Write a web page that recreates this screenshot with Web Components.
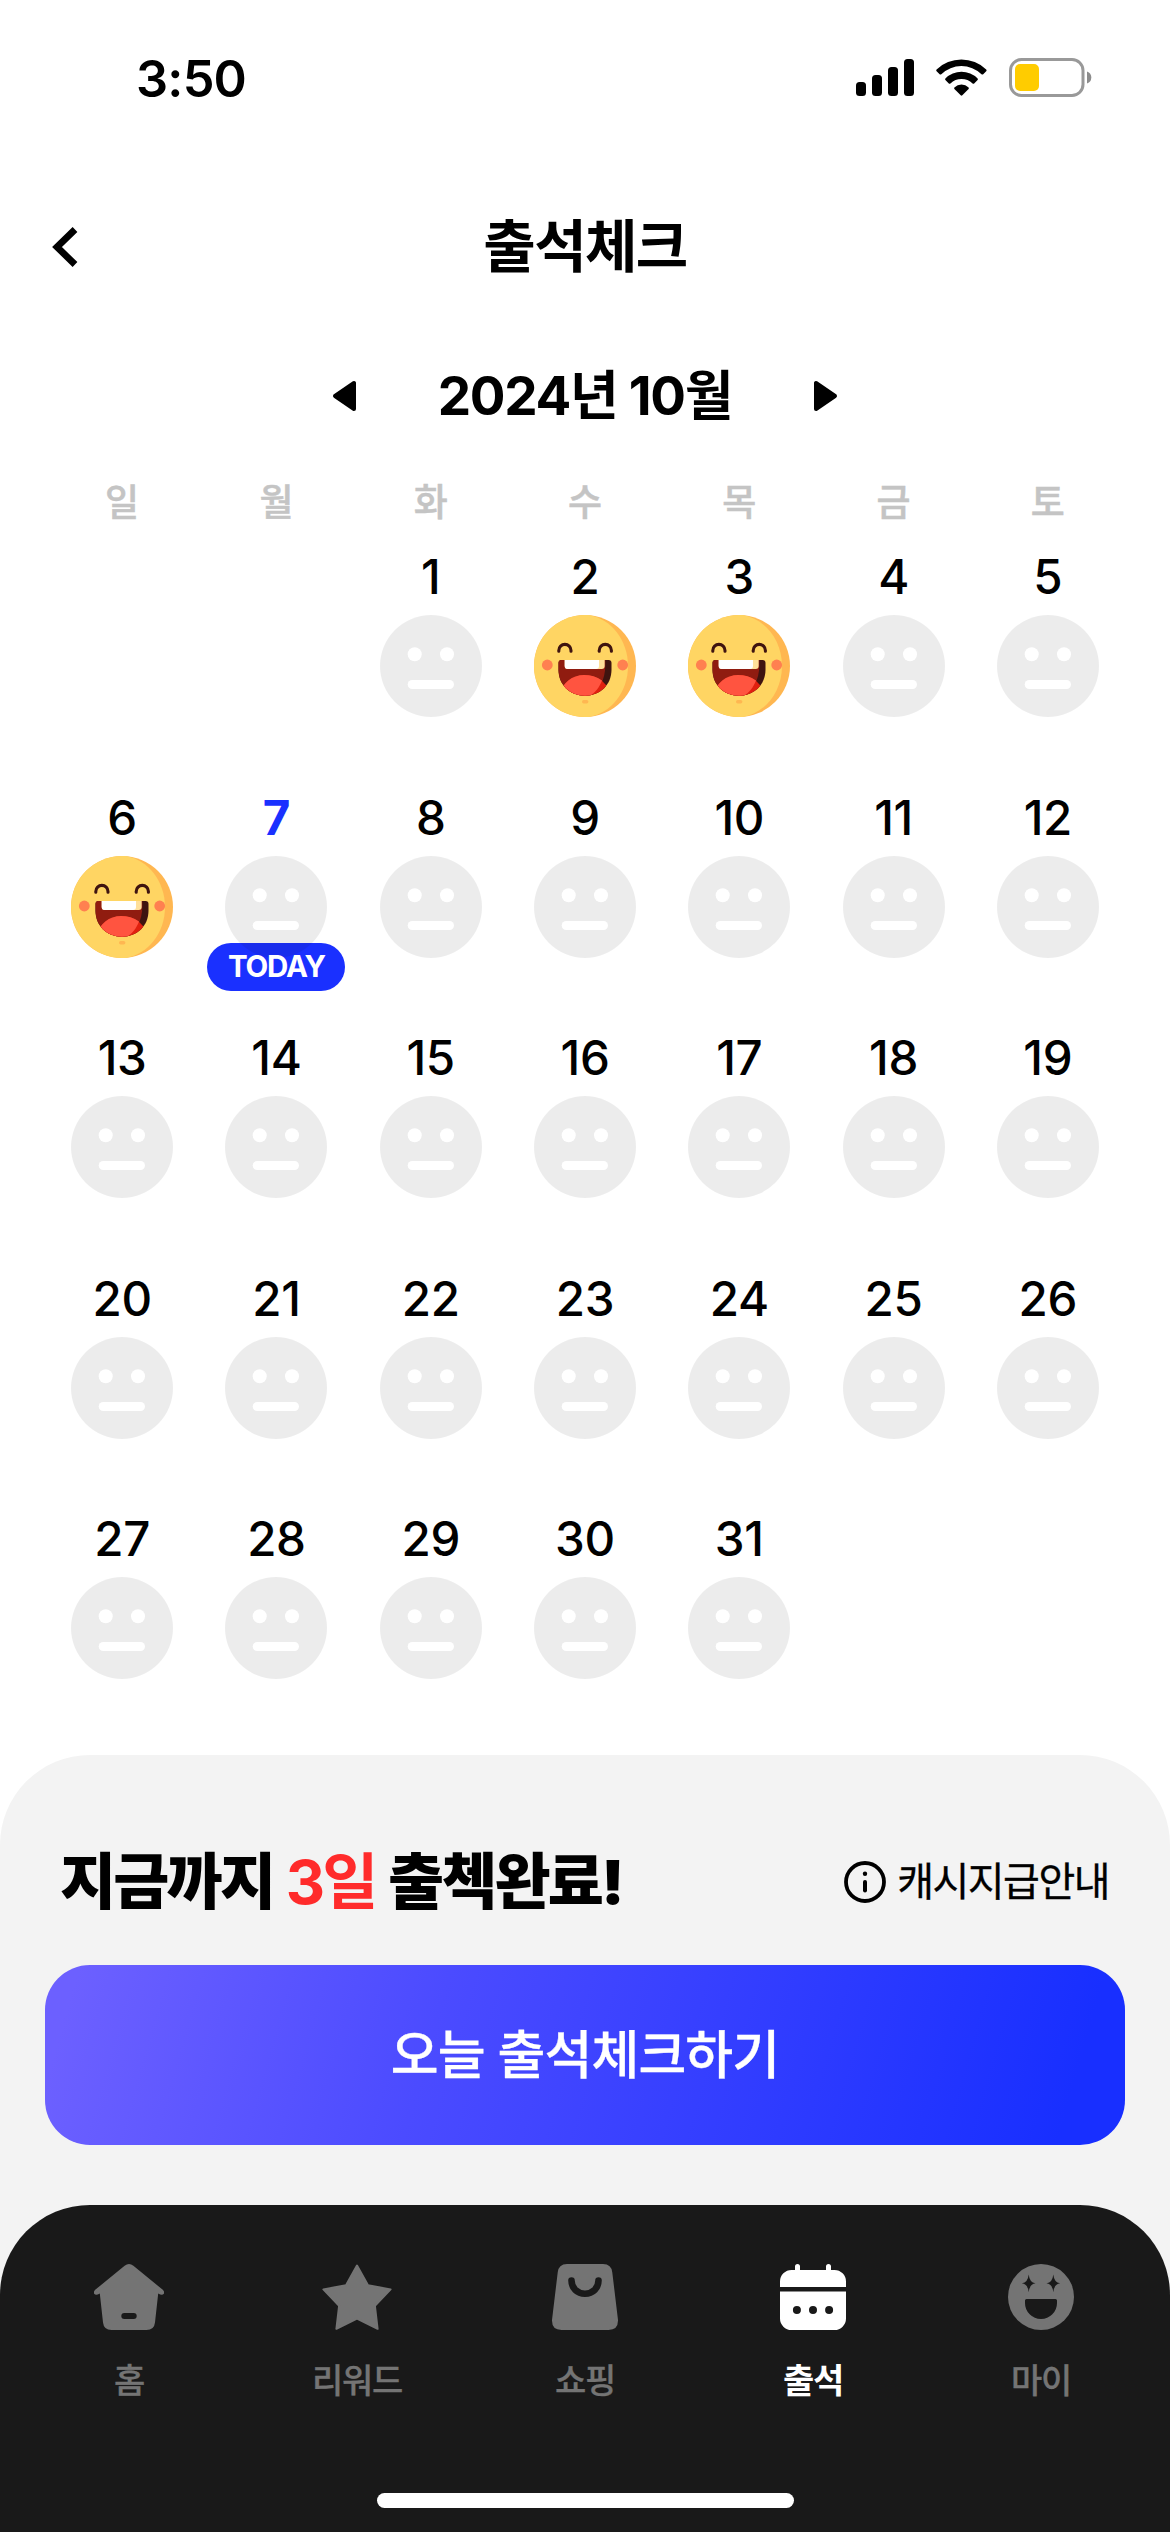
<!DOCTYPE html>
<html lang="ko">
<head>
<meta charset="utf-8">
<title>출석체크</title>
<style>
  body {
    margin: 0;
    background: #fff;
    color: #000;
    font-family: Inter, "Noto Sans CJK KR", sans-serif;
  }
</style>
</head>
<body>
<attendance-app></attendance-app>

<script>
// small helper, every element here just stamps markup in an open root
class BaseElement extends HTMLElement {
  constructor() {
    super();
    this._shadowRoot = this.attachShadow({mode: 'open'});
  }
  connectedCallback() {
    this._shadowRoot.innerHTML = this.render();
  }
}

class StatusBar extends BaseElement {
  render() {
    return `
      <style>
        :host { display: flex; justify-content: space-between; height: 156px; box-sizing: border-box; padding: 58px 78px 0 136px; }
        .time { font-size: 50.5px; font-weight: 600; line-height: 41px; letter-spacing: -0.8px; }
        svg { display: block; }
      </style>
      <span class="time">3:50</span>
      <svg width="236" height="40" viewBox="856 58 236 40">
        <rect x="856" y="82" width="10" height="14" rx="3.5"/>
        <rect x="872" y="75" width="10" height="21" rx="3.5"/>
        <rect x="888" y="67" width="10" height="29" rx="3.5"/>
        <rect x="904" y="59" width="10" height="37" rx="3.5"/>
        <path d="M936.6 69.4A36 36 0 0 1 986.2 69.4Q987 70.3 986.2 71.2L983.2 74.2Q982.4 74.9 981.5 74.2A29 29 0 0 0 941.3 74.2Q940.4 74.9 939.6 74.2L936.6 71.2Q935.8 70.3 936.6 69.4Z"/>
        <path d="M945.4 78.4A23 23 0 0 1 977.6 78.4Q978.3 79.2 977.6 80L974.2 83.4Q973.4 84.1 972.6 83.4A16.3 16.3 0 0 0 950.4 83.4Q949.6 84.1 948.8 83.4L945.4 80Q944.7 79.2 945.4 78.4Z"/>
        <path d="M954.4 87.4A10.4 10.4 0 0 1 968.6 87.4Q969.2 88.2 968.6 88.9L962.3 95.3Q961.5 96 960.7 95.3L954.4 88.9Q953.8 88.2 954.4 87.4Z"/>
        <rect x="1010.5" y="59.5" width="72.5" height="36" rx="11" fill="none" stroke="#999" stroke-width="3"/>
        <rect x="1015" y="64" width="24" height="27" rx="5" fill="#fc0"/>
        <path d="M1087 71.5Q1091.3 73 1091.3 77.5T1087 83.5Z" fill="#8c8c8c"/>
      </svg>
    `;
  }
}

class TitleBar extends BaseElement {
  render() {
    return `
      <style>
        :host { display: grid; grid-template-columns: 100px 1fr 100px; align-items: center; height: 182px; }
        h1 { margin: 0; text-align: center; font-size: 57px; font-weight: 700; line-height: 80px; letter-spacing: -1.6px; }
        svg { margin-left: 50px; display: block; }
      </style>
      <svg width="30" height="42" viewBox="0 0 30 42"><path d="M25 3.5L7 21L25 38.5" fill="none" stroke="#000" stroke-width="6.8"/></svg>
      <h1><slot></slot></h1>
    `;
  }
}

class MonthPicker extends BaseElement {
  render() {
    return `
      <style>
        :host { display: flex; justify-content: center; align-items: center; gap: 80px; height: 116px; }
        h2 { margin: 0; width: 296px; text-align: center; white-space: nowrap; font-size: 53px; font-weight: 700; line-height: 70px; letter-spacing: -1.3px; }
        svg { display: block; }
      </style>
      <svg width="25" height="32" viewBox="0 0 25 32"><path d="M22 3V29L3 16Z" stroke="#000" stroke-width="4" stroke-linejoin="round"/></svg>
      <h2><slot></slot></h2>
      <svg width="25" height="32" viewBox="0 0 25 32"><path d="M3 3V29L22 16Z" stroke="#000" stroke-width="4" stroke-linejoin="round"/></svg>
    `;
  }
}

class FaceStamp extends BaseElement {
  render() {
    const off = `
      <circle cx="51" cy="51" r="51" fill="#000" fill-opacity=".073"/>
      <circle cx="34.7" cy="39.3" r="7" fill="#fff"/>
      <circle cx="67" cy="39.3" r="7" fill="#fff"/>
      <rect x="27.7" y="65" width="46.3" height="9" rx="4.5" fill="#fff"/>`;
    const on = `
      <defs><clipPath id="m"><path d="M27.5 45H74.5Q77.5 45 77.5 48V54.5C77.5 70 66 80.7 51 80.7S24.5 70 24.5 54.5V48Q24.5 45 27.5 45Z"/></clipPath></defs>
      <circle cx="51" cy="51" r="51" fill="#ffb751"/>
      <path d="M51 0A51 51 0 0 0 51 102H55C77 98 94 77 94 51S77 4 55 0Z" fill="#ffd563"/>
      <g clip-path="url(#m)">
        <rect x="24" y="44" width="54" height="38" fill="#3f1410"/>
        <path d="M24 44H71.3V50C71.3 66 64 77 54 82H24Z" fill="#901c10"/>
        <ellipse cx="51" cy="82" rx="25" ry="22" fill="#e0200f"/>
        <path d="M24 82C28 68 38 60 50 60Q60 60 68 65.4C65 73 61 78 54 82Z" fill="#ff5440"/>
      </g>
      <path d="M30.7 45H70.7V51Q70.7 54 67.7 54H33.7Q30.7 54 30.7 51Z" fill="#ffe09a"/>
      <path d="M30.7 45H65V51Q65 54 62 54H33.7Q30.7 54 30.7 51Z" fill="#fff"/>
      <path d="M24.8 36.2V35.5A6.1 6.1 0 0 1 37 35.5V36.2M65.2 36.2V35.5A6.1 6.1 0 0 1 77.4 35.5V36.2" fill="none" stroke="#3f1410" stroke-width="3.1" stroke-linecap="round"/>
      <circle cx="13.3" cy="50" r="5.4" fill="#ff8050"/>
      <circle cx="88.7" cy="50" r="5.4" fill="#ff8050"/>
      <rect x="48" y="85" width="6.4" height="3.4" rx="1.7" fill="#ffb751"/>`;
    return `
      <style>:host { display: block; } svg { display: block; }</style>
      <svg width="102" height="102" viewBox="0 0 102 102">${this.hasAttribute('checked') ? on : off}</svg>
    `;
  }
}

class CalendarDay extends BaseElement {
  render() {
    const today = this.hasAttribute('today');
    return `
      <style>
        :host { display: flex; flex-direction: column; align-items: center; position: relative; height: 240.5px; isolation: isolate; }
        .day { font-size: 47.5px; font-weight: 450; line-height: 60px; margin-bottom: 8px; letter-spacing: -0.3px; }
        :host([today]) .day { color: #1a30ff; font-weight: 700; }
        /* the badge lies under the translucent face, its text over it */
        .badge { position: absolute; top: 155px; width: 138px; height: 48px; border-radius: 24px; background: #1a30ff; z-index: -1; }
        .label { position: absolute; top: 155px; line-height: 46px; color: #fff; font-size: 29.5px; font-weight: 700; letter-spacing: -1.2px; }
      </style>
      <span class="day">${this.getAttribute('day')}</span>
      <face-stamp ${this.hasAttribute('checked') ? 'checked' : ''}></face-stamp>
      ${today ? '<div class="badge"></div><span class="label">TODAY</span>' : ''}
    `;
  }
}

class MonthCalendar extends BaseElement {
  render() {
    const first = 2;
    const checked = [2, 3, 6];
    const names = ['일', '월', '화', '수', '목', '금', '토'];
    let days = '';
    for (let d = 1; d <= 31; d++) {
      days += `<calendar-day day="${d}" ${checked.includes(d) ? 'checked' : ''} ${d === 7 ? 'today' : ''}
        ${d === 1 ? `style="grid-column-start: ${first + 1}"` : ''}></calendar-day>`;
    }
    return `
      <style>
        :host { display: block; padding: 0 45px; height: 1301px; box-sizing: border-box; }
        .grid { display: grid; grid-template-columns: repeat(7, 1fr); }
        .names { height: 93px; color: #c4c4c4; font-size: 37px; font-weight: 500; line-height: 98px; text-align: center; -webkit-text-stroke: 0.5px #c4c4c4; }
      </style>
      <div class="grid names">${names.map(n => `<span>${n}</span>`).join('')}</div>
      <div class="grid">${days}</div>
    `;
  }
}

class CheckPanel extends BaseElement {
  render() {
    return `
      <style>
        :host { display: block; height: 540px; box-sizing: border-box; padding: 82px 45px 0; background: #f3f3f3; border-radius: 90px 90px 0 0; }
        .row { display: flex; justify-content: space-between; align-items: center; height: 90px; margin-bottom: 38px; padding: 0 16px 0 15px; }
        .count { font-size: 61px; font-weight: 900; line-height: 90px; letter-spacing: -2.8px; word-spacing: 3px; white-space: nowrap; }
        .count b { color: #ff2b2b; font-weight: 700; }
        .info { display: flex; align-items: center; gap: 11px; font-size: 40px; font-weight: 400; letter-spacing: -1.5px; line-height: 60px; -webkit-text-stroke: 0.3px #000; }
        button { display: block; width: 100%; height: 180px; padding: 0 0 8px; border: 0; border-radius: 45px; color: #fff; font: inherit; font-size: 52px; font-weight: 500; letter-spacing: -0.9px;
          -webkit-text-stroke: 0.3px #fff; background: linear-gradient(106deg, #6c60ff 3%, #4b4bff 36%, #182fff 94%); }
      </style>
      <div class="row">
        <span class="count">지금까지 <b>3일</b> 출첵완료!</span>
        <span class="info">
          <svg width="42" height="42" viewBox="0 0 42 42"><circle cx="21" cy="21" r="19" fill="none" stroke="#000" stroke-width="3.8"/><circle cx="21" cy="12.7" r="2.2"/><rect x="19" y="19" width="4" height="12.5" rx="2"/></svg>
          <span>캐시지급안내</span>
        </span>
      </div>
      <button>오늘 출석체크하기</button>
    `;
  }
}

const ICONS = {
  home: `<path fill-rule="evenodd" d="M30.6 1.8Q35 -1.6 39.4 1.8L68.8 25.8Q71 28 69.6 30Q68 31.8 64.2 29.4L61 58.5Q60.2 66 52.5 66H17.5Q9.8 66 9 58.5L5.8 29.4Q2 31.8 .4 30Q-1 28 1.2 25.8ZM30.3 49A3 3 0 0 0 30.3 55H39.7A3 3 0 0 0 39.7 49Z"/>`,
  star: `<path d="M35 1.6L46 21.3L68.6 25.4L52.9 41.8L55.6 64.8L35 54.7L14.4 64.8L17.1 41.8L1.4 25.4L24 21.3Z" stroke="currentColor" stroke-width="2" stroke-linejoin="round"/>`,
  bag: `<path d="M17 0H53Q61.5 0 62.3 8.5L68 56Q68.3 66 58.5 66H11.5Q1.7 66 2 56L7.7 8.5Q8.5 0 17 0Z"/><path d="M21.5 16.5C21.5 24 27 29.7 35 29.7S48.5 24 48.5 16.5" fill="none" stroke="#191919" stroke-width="6.6" stroke-linecap="round"/>`,
  calendar: `<path d="M17 6V2.5A2.5 2.5 0 0 1 22 2.5V6H48V2.5A2.5 2.5 0 0 1 53 2.5V6H56.5A11.5 11.5 0 0 1 68 17.5V23H2V17.5A11.5 11.5 0 0 1 13.5 6Z"/><path fill-rule="evenodd" d="M2 27.5H68V54.5A11.5 11.5 0 0 1 56.5 66H13.5A11.5 11.5 0 0 1 2 54.5ZM14.9 46a4 4 0 0 0 8 0a4 4 0 0 0 -8 0ZM31 46a4 4 0 0 0 8 0a4 4 0 0 0 -8 0ZM47.1 46a4 4 0 0 0 8 0a4 4 0 0 0 -8 0Z"/>`,
  smile: `<circle cx="35" cy="33" r="33"/><path fill="#191919" d="M22.7 10.5Q23.5 18.5 29.5 19.3Q23.5 20.1 22.7 28.3Q21.9 20.1 15.9 19.3Q21.9 18.5 22.7 10.5ZM47.3 10.5Q48.1 18.5 54.1 19.3Q48.1 20.1 47.3 28.3Q46.5 20.1 40.5 19.3Q46.5 18.5 47.3 10.5ZM20.5 35H49.5Q51 35 51 36.5V39A16 16 0 0 1 19 39V36.5Q19 35 20.5 35Z"/>`
};

class TabItem extends BaseElement {
  render() {
    return `
      <style>
        :host { display: flex; flex-direction: column; align-items: center; color: #747474; }
        :host([active]) { color: #fff; }
        svg { display: block; margin-top: 59px; fill: currentColor; }
        span { margin-top: 26px; font-size: 34px; font-weight: 500; line-height: 50px; letter-spacing: -1.2px; -webkit-text-stroke: 0.3px currentColor; }
        :host([active]) span { font-weight: 700; -webkit-text-stroke: 0; }
      </style>
      <svg width="70" height="66" viewBox="0 0 70 66">${ICONS[this.getAttribute('icon')]}</svg>
      <span><slot></slot></span>
    `;
  }
}

class TabBar extends BaseElement {
  render() {
    return `
      <style>
        /* square backing behind the round corners keeps the panel colour */
        :host { display: block; margin-top: -90px; background: #f3f3f3; }
        .bar { display: flex; flex-direction: column; align-items: center; height: 327px; background: #191919; border-radius: 90px 90px 0 0; }
        nav { display: grid; grid-template-columns: repeat(5, 228px); height: 288px; }
        .home { width: 417px; height: 15px; border-radius: 8px; background: #fff; }
      </style>
      <div class="bar">
        <nav>
          <tab-item icon="home">홈</tab-item>
          <tab-item icon="star">리워드</tab-item>
          <tab-item icon="bag">쇼핑</tab-item>
          <tab-item icon="calendar" active>출석</tab-item>
          <tab-item icon="smile">마이</tab-item>
        </nav>
        <div class="home"></div>
      </div>
    `;
  }
}

class AttendanceApp extends BaseElement {
  render() {
    return `
      <style>:host { display: block; width: 1170px; height: 2532px; overflow: hidden; }</style>
      <status-bar></status-bar>
      <title-bar>출석체크</title-bar>
      <month-picker>2024년 10월</month-picker>
      <month-calendar></month-calendar>
      <check-panel></check-panel>
      <tab-bar></tab-bar>
    `;
  }
}

customElements.define('status-bar', StatusBar);
customElements.define('title-bar', TitleBar);
customElements.define('month-picker', MonthPicker);
customElements.define('face-stamp', FaceStamp);
customElements.define('calendar-day', CalendarDay);
customElements.define('month-calendar', MonthCalendar);
customElements.define('check-panel', CheckPanel);
customElements.define('tab-item', TabItem);
customElements.define('tab-bar', TabBar);
customElements.define('attendance-app', AttendanceApp);
</script>
</body>
</html>
